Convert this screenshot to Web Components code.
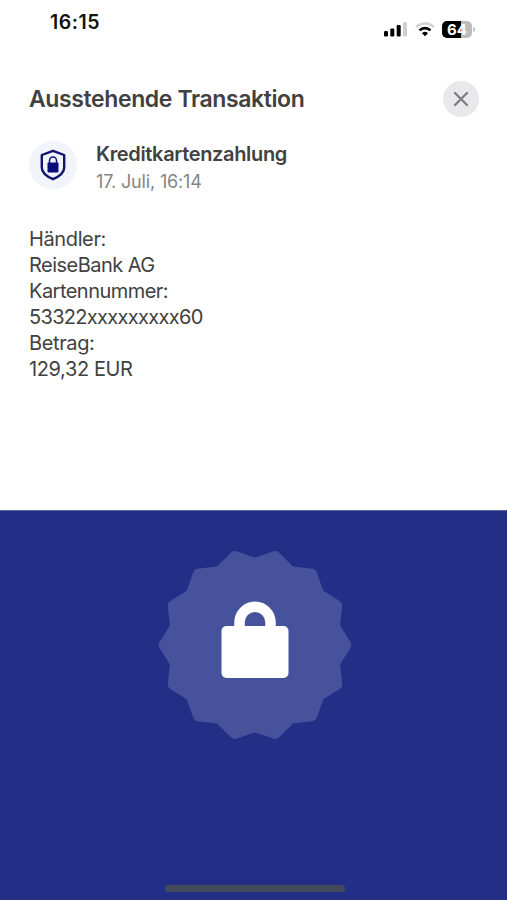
<!DOCTYPE html>
<html lang="de">
<head>
<meta charset="utf-8">
<title>Ausstehende Transaktion</title>
<style>
  body {
    margin: 0;
    background: #fff;
    color: #414141;
    font-family: Inter, "Liberation Sans", sans-serif;
  }

  .tight {
    letter-spacing: -.53px;
  }

  .number {
    letter-spacing: -.68px;
  }
</style>
</head>
<body>

<app-screen>
  <status-bar slot="top" battery="64">16:15</status-bar>
  <sheet-header slot="top">Ausstehende Transaktion</sheet-header>
  <payment-summary slot="top">
    Kreditkartenzahlung
    <span slot="date">17. Juli, 16:14</span>
  </payment-summary>
  <payment-details slot="top">
    <div>Händler:</div>
    <div class="tight">ReiseBank AG</div>
    <div class="tight">Kartennummer:</div>
    <div class="number">53322xxxxxxxxx60</div>
    <div>Betrag:</div>
    <div>129,32 EUR</div>
  </payment-details>
  <lock-badge></lock-badge>
</app-screen>

<script>
/*
 * Shared base, renders the template of an element into its shadow root
 */

class BaseElement extends HTMLElement {

  constructor() {
    super();

    let t = document.createElement("template");
    t.innerHTML = this.template;
    this.attachShadow({ mode: "open" });
    this.shadowRoot.append(t.content.cloneNode(true));
  }
}

/*
 * Full screen with a white sheet and a blue panel
 */

class AppScreen extends BaseElement {

  get template() {
    return `
    <style>
      :host {
        display: grid;
        grid-template-rows: 510px 1fr;
        height: 900px;
        overflow: hidden;
      }

      .panel {
        display: flex;
        flex-direction: column;
        align-items: center;
        justify-content: space-between;
        box-sizing: border-box;
        padding: 37px 0 8px 3px;
        background: #232e87;
        border-top: 1px solid #56629c;
      }

      .home {
        width: 180px;
        height: 7px;
        border-radius: 3px;
        background: #424a5b;
      }
    </style>

    <main><slot name="top"></slot></main>
    <section class="panel">
      <slot></slot>
      <div class="home"></div>
    </section>
    `;
  }
}

/*
 * Clock, signal, wifi and battery
 */

class StatusBar extends BaseElement {

  get template() {
    return `
    <style>
      :host {
        display: flex;
        justify-content: space-between;
        height: 60px;
        padding: 0 32px 0 50px;
        color: #111;
      }

      time {
        padding-top: 10px;
        font-size: 19.5px;
        font-weight: 600;
        line-height: 25px;
        letter-spacing: .5px;
      }

      .icons {
        display: flex;
        align-items: center;
        height: 18px;
        padding-top: 20px;
      }

      .wifi {
        margin: 0 7px 0 8px;
      }

      .battery {
        width: 30px;
        height: 17px;
        border-radius: 5px;
        background: linear-gradient(90deg, #000 64%, #bcbcbc 64%);
        color: #fff;
        font-size: 15px;
        font-weight: 700;
        line-height: 17px;
        text-align: center;
      }

      .cap {
        width: 2px;
        height: 5px;
        margin-left: 1px;
        border-radius: 0 2px 2px 0;
        background: #c4c4c4;
      }
    </style>

    <time><slot></slot></time>
    <div class="icons">
      <svg width="23" height="16" viewBox="0 0 23 16">
        <rect x="0" y="10" width="4" height="5.5" rx="1.2"/>
        <rect x="6.3" y="7.5" width="4" height="8" rx="1.2"/>
        <rect x="12.7" y="4" width="4" height="11.5" rx="1.2"/>
        <rect x="19" y="1" width="4" height="14.5" rx="1.2" fill="#d0d0d0"/>
      </svg>
      <svg class="wifi" width="20" height="16" viewBox="0 0 20 16" fill="none" stroke-width="2.6">
        <path d="M1.2 6.2a12.3 12.3 0 0 1 17.6 0" stroke="#d0d0d0"/>
        <path d="M4.5 9.4a7.8 7.8 0 0 1 11 0" stroke="#000"/>
        <path d="M10 15.2L7 12.2a4.3 4.3 0 0 1 6 0z" fill="#000"/>
      </svg>
      <div class="battery"></div>
      <div class="cap"></div>
    </div>
    `;
  }

  connectedCallback() {
    this.shadowRoot.querySelector(".battery").textContent = this.getAttribute("battery");
  }
}

/*
 * Title with a close button
 */

class SheetHeader extends BaseElement {

  get template() {
    return `
    <style>
      :host {
        display: flex;
        align-items: center;
        justify-content: space-between;
        height: 36px;
        padding: 21px 28px 0 29px;
      }

      h1 {
        margin: 0;
        font-size: 23px;
        font-weight: 600;
        line-height: 36px;
        letter-spacing: -.39px;
        white-space: nowrap;
      }

      button {
        display: grid;
        place-items: center;
        width: 36px;
        height: 36px;
        padding: 0;
        border: 0;
        border-radius: 50%;
        background: #e9e9eb;
      }
    </style>

    <h1><slot></slot></h1>
    <button aria-label="Schließen">
      <svg width="16" height="16" viewBox="0 0 16 16" stroke="#7d7d80" stroke-width="2.3" stroke-linecap="round">
        <path d="M2 2l12 12M14 2L2 14"/>
      </svg>
    </button>
    `;
  }
}

/*
 * Shield icon, kind of payment and date
 */

class PaymentSummary extends BaseElement {

  get template() {
    return `
    <style>
      :host {
        display: flex;
        gap: 19px;
        padding: 24px 29px 0;
      }

      .icon {
        display: grid;
        place-items: center;
        width: 48px;
        height: 48px;
        border-radius: 50%;
        background: #f2f4fb;
      }

      h2 {
        margin: 0;
        font-size: 20px;
        font-weight: 600;
        line-height: 27px;
        letter-spacing: -.35px;
      }

      .date {
        color: #858585;
        font-size: 18px;
        line-height: 28px;
        letter-spacing: -.15px;
      }
    </style>

    <div class="icon">
      <svg width="26" height="32" viewBox="0 0 26 32">
        <path d="M13 1.8L24.2 6v12.5c0 5.2-5.4 9.2-11.2 11.7C7.2 27.7 1.8 23.7 1.8 18.5V6z"
          fill="none" stroke="#12136f" stroke-width="2.4" stroke-linejoin="round"/>
        <path d="M9.5 15v-3.5a3.5 3.5 0 0 1 7 0V15" fill="none" stroke="#12136f" stroke-width="1.5"/>
        <rect x="7.5" y="13.500" width="11" height="10" rx="1" fill="#0c0b7c"/>
      </svg>
    </div>
    <div>
      <h2><slot></slot></h2>
      <div class="date"><slot name="date"></slot></div>
    </div>
    `;
  }
}

/*
 * Plain lines of the transaction
 */

class PaymentDetails extends BaseElement {

  get template() {
    return `
    <style>
      :host {
        display: block;
        padding: 30px 29px 0;
        font-size: 20px;
        line-height: 26px;
        letter-spacing: -.38px;
      }
    </style>

    <slot></slot>
    `;
  }
}

/*
 * Padlock on a seal with 14 points
 */

class LockBadge extends BaseElement {

  get template() {
    return `
    <style>
      :host {
        display: block;
        width: 194px;
        height: 194px;
      }

      svg {
        display: block;
      }
    </style>

    <svg width="194" height="194" viewBox="-97 -97 194 194">
      <polygon fill="#46529b" stroke="#46529b" stroke-width="10" stroke-linejoin="round"/>
      <path d="M-15.5 -16v-6.7a15.5 15.5 0 0 1 31 0v6.7" fill="none" stroke="#fff" stroke-width="10.5"/>
      <rect x="-33.5" y="-19" width="67" height="52" rx="5" fill="#fff"/>
    </svg>
    `;
  }

  connectedCallback() {
    let points = [];

    // Tips and notches take turns
    for(let i = 0; i < 28; i++) {
      let r = i % 2 ? 82 : 91.3;
      let a = i * Math.PI / 14;
      points.push((r * Math.cos(a)).toFixed(2) + "," + (r * Math.sin(a)).toFixed(2));
    }
    this.shadowRoot.querySelector("polygon").setAttribute("points", points.join(" "));
  }
}

customElements.define("app-screen", AppScreen);
customElements.define("status-bar", StatusBar);
customElements.define("sheet-header", SheetHeader);
customElements.define("payment-summary", PaymentSummary);
customElements.define("payment-details", PaymentDetails);
customElements.define("lock-badge", LockBadge);
</script>

</body>
</html>
